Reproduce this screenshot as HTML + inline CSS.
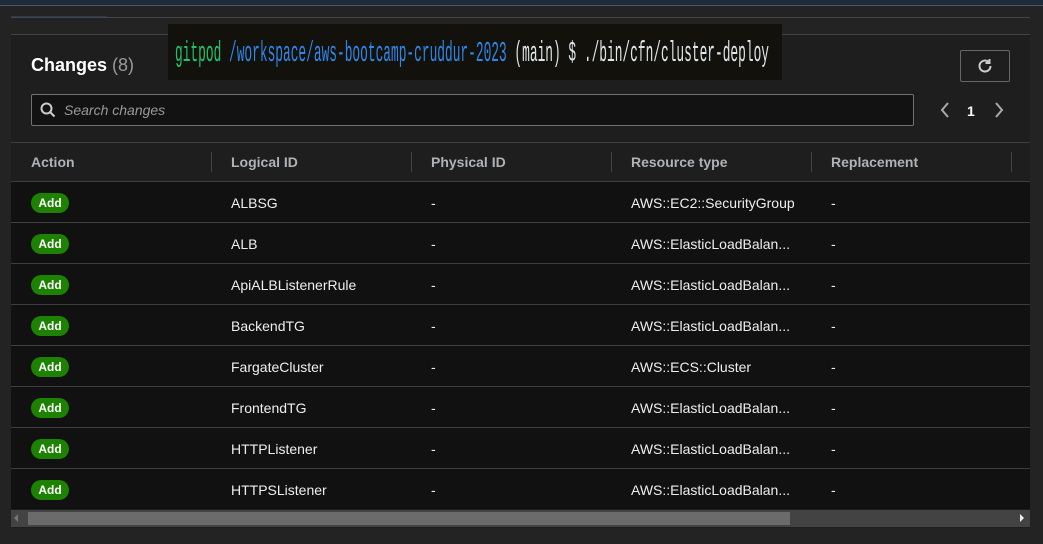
<!DOCTYPE html><html><head><style>
body{margin:0;width:1043px;height:544px;background:#232323;font-family:"Liberation Sans",sans-serif;position:relative;overflow:hidden}
.a{position:absolute}
.top{left:0;top:0;width:1043px;height:5px;background:#1f2a3b;border-bottom:1px solid #555}
.panel{left:11px;top:34px;width:1019px;height:493px;background:#1e1e1e;border-top:1px solid #444}
.line{height:1px;background:#444}
.term{left:168px;top:24px;width:614px;height:56px;background:#12110c;overflow:hidden}
.row{position:absolute;left:11px;width:1019px;height:40px;background:#111;border-top:1px solid #3e3e3e;color:#eee;font-size:14px}
.row div{position:absolute;top:13px}
.badge{left:20px!important;top:11px!important;width:38px;height:20px;border-radius:10px;background:#1d8102;color:#fff;font-size:12px;font-weight:bold;text-align:center;line-height:20px}
.hd{position:absolute;top:154px;color:#aeb3b8;font-weight:bold;font-size:14px}
.sep{position:absolute;top:152px;width:1px;height:20px;background:#444}
</style></head><body>
<div class="a top"></div>
<div class="a line" style="left:11px;top:17px;width:1019px"></div>
<div class="a" style="left:11px;top:16px;width:96px;height:1px;background:#2a3a55"></div>
<div class="a panel"></div>
<div class="a" style="left:31px;top:55px;color:#fff;font-size:18px;font-weight:bold">Changes <span style="color:#9a9a9a;font-weight:normal">(8)</span></div>
<div class="a term"><svg width="614" height="56"><text x="7" y="37" font-family="Liberation Mono, monospace" font-size="29" fill="#dfe6ea" textLength="594" lengthAdjust="spacingAndGlyphs"><tspan fill="#21c46b">gitpod</tspan> <tspan fill="#2f86e8">/workspace/aws-bootcamp-cruddur-2023</tspan> (main) $ ./bin/cfn/cluster-deploy</text></svg></div>
<div class="a" style="left:960px;top:50px;width:50px;height:32px;border:1px solid #666;border-radius:2px;box-sizing:border-box"></div>
<svg class="a" style="left:976px;top:57px" width="18" height="18" viewBox="0 0 18 18"><path d="M14.5 9a5.5 5.5 0 1 1-2-4.2" fill="none" stroke="#ccc" stroke-width="2"/><path d="M13.5 2v4h-4" fill="none" stroke="#ccc" stroke-width="2"/></svg>
<div class="a" style="left:31px;top:94px;width:883px;height:32px;border:1px solid #6b7378;border-radius:2px;background:#121212;box-sizing:border-box"></div>
<svg class="a" style="left:40px;top:102px" width="16" height="16" viewBox="0 0 16 16"><circle cx="6.5" cy="6.5" r="5" fill="none" stroke="#ccc" stroke-width="2"/><path d="M10 10l4.5 4.5" stroke="#ccc" stroke-width="2"/></svg>
<div class="a" style="left:64px;top:102px;color:#999;font-style:italic;font-size:14px">Search changes</div>
<svg class="a" style="left:936px;top:100px" width="80" height="20"><path d="M12 3l-6 7 6 7" fill="none" stroke="#aaa" stroke-width="2"/><path d="M60 3l6 7-6 7" fill="none" stroke="#aaa" stroke-width="2"/></svg>
<div class="a" style="left:967px;top:103px;color:#fff;font-weight:bold;font-size:14px">1</div>
<div class="a line" style="left:11px;top:142px;width:1019px;background:#3e3e3e"></div>
<div class="hd" style="left:31px">Action</div><div class="hd" style="left:231px">Logical ID</div><div class="hd" style="left:431px">Physical ID</div><div class="hd" style="left:631px">Resource type</div><div class="hd" style="left:831px">Replacement</div>
<div class="sep" style="left:211px"></div><div class="sep" style="left:411px"></div><div class="sep" style="left:611px"></div><div class="sep" style="left:811px"></div><div class="sep" style="left:1011px"></div>
<div class="row" style="top:181px"><div class="badge">Add</div><div style="left:220px">ALBSG</div><div style="left:420px">-</div><div style="left:620px">AWS::EC2::SecurityGroup</div><div style="left:820px">-</div></div>
<div class="row" style="top:222px"><div class="badge">Add</div><div style="left:220px">ALB</div><div style="left:420px">-</div><div style="left:620px">AWS::ElasticLoadBalan...</div><div style="left:820px">-</div></div>
<div class="row" style="top:263px"><div class="badge">Add</div><div style="left:220px">ApiALBListenerRule</div><div style="left:420px">-</div><div style="left:620px">AWS::ElasticLoadBalan...</div><div style="left:820px">-</div></div>
<div class="row" style="top:304px"><div class="badge">Add</div><div style="left:220px">BackendTG</div><div style="left:420px">-</div><div style="left:620px">AWS::ElasticLoadBalan...</div><div style="left:820px">-</div></div>
<div class="row" style="top:345px"><div class="badge">Add</div><div style="left:220px">FargateCluster</div><div style="left:420px">-</div><div style="left:620px">AWS::ECS::Cluster</div><div style="left:820px">-</div></div>
<div class="row" style="top:386px"><div class="badge">Add</div><div style="left:220px">FrontendTG</div><div style="left:420px">-</div><div style="left:620px">AWS::ElasticLoadBalan...</div><div style="left:820px">-</div></div>
<div class="row" style="top:427px"><div class="badge">Add</div><div style="left:220px">HTTPListener</div><div style="left:420px">-</div><div style="left:620px">AWS::ElasticLoadBalan...</div><div style="left:820px">-</div></div>
<div class="row" style="top:468px"><div class="badge">Add</div><div style="left:220px">HTTPSListener</div><div style="left:420px">-</div><div style="left:620px">AWS::ElasticLoadBalan...</div><div style="left:820px">-</div></div>
<div class="a" style="left:11px;top:510px;width:1019px;height:17px;background:#434343"></div>
<div class="a" style="left:28px;top:512px;width:762px;height:13px;background:#6b6b6b"></div>
<div class="a" style="left:14px;top:514px;width:0;height:0;border:4px solid transparent;border-right-color:#777;border-left:0"></div>
<div class="a" style="left:1020px;top:514px;width:0;height:0;border:4px solid transparent;border-left-color:#eee;border-right:0"></div>
</body></html>
